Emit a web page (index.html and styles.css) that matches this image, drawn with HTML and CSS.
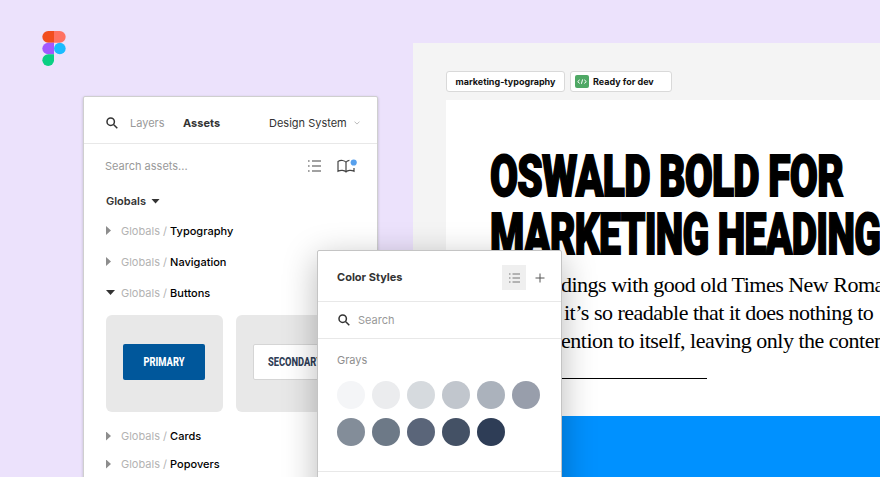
FILE: index.html
```html
<!DOCTYPE html>
<html lang="en">
<head>
<meta charset="utf-8">
<title>Design System</title>
<link rel="stylesheet" href="styles.css">
</head>
<body>
<main class="canvas">
  <svg class="logo" viewBox="0 0 24 36">
    <path fill="#f24e1e" d="M6 0h6v12H6A6 6 0 0 1 6 0z"/>
    <path fill="#ff7262" d="M12 0h6a6 6 0 0 1 0 12h-6z"/>
    <path fill="#a259ff" d="M6 12h6v12H6a6 6 0 0 1 0-12z"/>
    <circle fill="#1abcfe" cx="18" cy="18" r="6"/>
    <path fill="#0acf83" d="M6 24h6v6a6 6 0 1 1-6-6z"/>
  </svg>

  <section class="board">
    <div class="tags">
      <span class="tag tag-name">marketing-typography</span>
      <span class="tag tag-ready">
        <svg class="code" viewBox="0 0 14 13"><path d="M4.7 4.8 2.7 6.6l2 1.8M9.3 4.8l2 1.8-2 1.8M7.6 4.4 6.4 8.8"/></svg>
        Ready for dev
      </span>
    </div>
    <article class="page">
      <h1 class="headline">
        <svg class="headline-line" viewBox="0 0 440 58">
          <text x="0" y="44.5" textLength="353" lengthAdjust="spacingAndGlyphs">OSWALD BOLD FOR</text>
        </svg>
        <svg class="headline-line" viewBox="0 0 440 58">
          <text x="0" y="44.5" textLength="414" lengthAdjust="spacingAndGlyphs">MARKETING HEADINGS</text>
        </svg>
      </h1>
      <p class="copy">
        <span class="line"><span class="lead">hea</span>dings with good old Times New Roman.</span>
        <span class="line"><span class="lead lead-wide">And </span>it’s so readable that it does nothing to</span>
        <span class="line"><span class="lead">att</span>ention to itself, leaving only the content</span>
      </p>
      <hr class="rule">
      <div class="band"></div>
    </article>
  </section>

  <section class="window assets">
    <header class="tabs">
      <svg class="icon-search" viewBox="0 0 12 12"><circle cx="4.7" cy="4.7" r="3.7"/><path d="m7.5 7.5 3.8 3.8"/></svg>
      <span class="tab-layers">Layers</span>
      <span class="tab-assets">Assets</span>
      <span class="tab-file">Design System</span>
      <svg class="chevron" viewBox="0 0 6 4"><path d="M.5.6 3 3.1 5.5.6"/></svg>
    </header>
    <div class="find">
      <span class="find-text">Search assets...</span>
      <svg class="icon-list" viewBox="0 0 13 12"><path d="M0 1h1.6M4 1h9M0 6h1.6M4 6h9M0 11h1.6M4 11h9"/></svg>
      <svg class="icon-book" viewBox="0 0 20 14">
        <path d="M9 3.3C7.8 1.2 3.5.8 1 2.500v9.800c2.500-1.300 6.500-1.200 8 .7 1.500-1.900 5.500-2 8-.7V9M9 3.300V13M9 3.300c.7-1.200 2-1.900 3.400-2"/>
        <circle cx="16.700" cy="3.500" r="3.100"/>
      </svg>
    </div>
    <h2 class="group">Globals <i class="caret"></i></h2>
    <ul class="rows">
      <li class="row"><i class="arrow"></i><span>Globals / <b>Typography</b></span></li>
      <li class="row"><i class="arrow"></i><span>Globals / <b>Navigation</b></span></li>
      <li class="row"><i class="caret"></i><span>Globals / <b>Buttons</b></span></li>
    </ul>
    <div class="previews">
      <div class="preview">
        <div class="button primary"><svg class="label" viewBox="0 0 52 16"><text x="5.500" y="12.300" textLength="41" lengthAdjust="spacingAndGlyphs">PRIMARY</text></svg></div>
      </div>
      <div class="preview">
        <div class="button secondary"><svg class="label" viewBox="0 0 52 16"><text x="0" y="12.300" textLength="54" lengthAdjust="spacingAndGlyphs">SECONDARY</text></svg></div>
      </div>
    </div>
    <ul class="rows rows-after">
      <li class="row"><i class="arrow"></i><span>Globals / <b>Cards</b></span></li>
      <li class="row"><i class="arrow"></i><span>Globals / <b>Popovers</b></span></li>
    </ul>
  </section>

  <section class="window styles">
    <header class="styles-head">
      <h2 class="styles-title">Color Styles</h2>
      <span class="toggle"><svg viewBox="0 0 11 10"><path d="M0 1h1.500M3.500 1H11M0 5h1.500M3.500 5H11M0 9h1.500M3.500 9H11"/></svg></span>
      <svg class="plus" viewBox="0 0 10 10"><path d="M5 .5v9M.5 5h9"/></svg>
    </header>
    <div class="styles-find">
      <svg class="icon-search" viewBox="0 0 12 12"><circle cx="4.700" cy="4.700" r="3.700"/><path d="m7.500 7.500 3.800 3.800"/></svg>
      <span>Search</span>
    </div>
    <div class="grays">
      <h3 class="grays-title">Grays</h3>
      <div class="swatches">
        <i class="swatch g1"></i><i class="swatch g2"></i><i class="swatch g3"></i><i class="swatch g4"></i><i class="swatch g5"></i><i class="swatch g6"></i>
        <i class="swatch g7"></i><i class="swatch g8"></i><i class="swatch g9"></i><i class="swatch g10"></i><i class="swatch g11"></i>
      </div>
    </div>
  </section>
</main>
</body>
</html>
```
FILE: styles.css
```css
* { box-sizing: border-box; }
body { margin: 0; font-family: Inter, sans-serif; font-size: 11px; color: #333; }
h1, h2, h3, p, ul { margin: 0; padding: 0; font-size: inherit; }
ul { list-style: none; }
svg { display: block; flex: none; fill: none; }
.canvas { position: relative; width: 880px; height: 477px; overflow: hidden; background: #ece2fc; }
.logo { position: absolute; left: 42.4px; top: 31px; width: 24px; height: 35px; }

.board { position: absolute; left: 413px; top: 43px; width: 467px; height: 434px; padding: 28px 0 0 33px; background: #f4f4f4; overflow: hidden; }
.tags { display: flex; gap: 5px; height: 21px; }
.tag { display: flex; align-items: center; border: 1px solid #d9d9d9; border-radius: 3px; background: #fff; color: #111; font-size: 9px; font-weight: 700; white-space: nowrap; }
.tag-name { width: 119px; justify-content: center; }
.tag-ready { width: 102px; padding-left: 4px; gap: 4px; }
.code { width: 14px; height: 13px; border-radius: 2px; background: #4fa865; stroke: #fff; stroke-width: 1; }
.page { height: 377px; margin-top: 8px; padding-top: 51px; background: #fff; display: flex; flex-direction: column; }
.headline { margin-left: 44px; }
.headline-line { width: 440px; height: 58px; overflow: visible; }
.headline text { font-family: Roboto, sans-serif; font-size: 56.5px; font-weight: 900; letter-spacing: -1px; fill: #000; stroke: #000; stroke-width: 1.8px; }
.copy { margin: 4px 0 0 44px; font: 22px/28px "Liberation Serif", serif; letter-spacing: -.5px; color: #000; }
.line { display: flex; white-space: pre; }
.lead { flex: none; width: 71px; text-align: right; }
.lead-wide { width: 74px; }
.rule { width: 217px; height: 1px; margin: 23px 0 0 44px; border: 0; background: #000; }
.band { flex: 1; margin-top: 37px; background: #0091ff; }

.window { position: absolute; background: #fff; border: 1px solid #cfcfcf; border-radius: 2px 2px 0 0; }
.assets { left: 83px; top: 96px; width: 295px; height: 400px; box-shadow: 0 1px 3px rgba(0,0,0,.2); }
.tabs { display: flex; align-items: center; height: 47px; padding: 6px 17px 0 22px; border-bottom: 1px solid #e8e8e8; white-space: nowrap; }
.icon-search { width: 12px; height: 12px; stroke: #333; stroke-width: 1.5; }
.tab-layers { width: 53px; margin-left: 12px; color: #999; }
.tab-assets { width: 86px; font-weight: 700; }
.tab-file { width: 85px; }
.chevron { width: 6px; height: 4px; stroke: #bbb; }
.find { display: flex; align-items: center; height: 45px; padding: 0 20px 1px 21px; color: #999; }
.find-text { width: 203px; }
.icon-list { width: 13px; height: 12px; stroke: #444; stroke-width: 1.2; }
.icon-book { width: 20px; height: 14px; margin-left: 16px; stroke: #444; stroke-width: 1.2; }
.icon-book circle { fill: #57a0ed; stroke: none; }
.group { display: flex; align-items: center; gap: 5px; height: 24px; padding-left: 22px; font-weight: 600; }
.caret { width: 9px; height: 5px; background: #333; clip-path: polygon(0 0, 100% 0, 50% 100%); }
.arrow { width: 5px; height: 9px; margin-right: 4px; background: #8d8d8d; clip-path: polygon(0 0, 100% 50%, 0 100%); }
.rows { padding: 2px 0 0 22px; }
.row { display: flex; align-items: center; gap: 6px; height: 31px; color: #b3b3b3; }
.row b { color: #000; font-weight: 500; }
.previews { display: flex; gap: 13px; margin-top: 7px; padding-left: 22px; }
.preview { display: flex; align-items: center; justify-content: center; width: 117px; height: 97px; border-radius: 6px; background: #e8e8e8; }
.button { display: flex; align-items: center; justify-content: center; width: 82px; height: 36px; margin: 0 1px 3px 0; border-radius: 2px; }
.primary { background: #00579b; }
.primary .label { fill: #fff; }
.secondary { background: #fff; border: 1px solid #d5d5d5; }
.secondary .label { fill: #2f3d56; }
.label { width: 52px; height: 16px; overflow: visible; }
.label text { font-family: Roboto, sans-serif; font-size: 12px; font-weight: 800; }
.rows-after { padding-top: 10px; }
.rows-after .row { height: 28px; }

.styles { left: 317px; top: 250px; width: 245px; height: 300px; border-color: #c4c4c4; box-shadow: 0 8px 34px rgba(0,0,0,.28); }
.styles-head { display: flex; align-items: center; height: 51px; padding: 3px 16px 0 19px; border-bottom: 1px solid #e8e8e8; }
.styles-title { flex: 1; margin-bottom: 2px; font-weight: 700; }
.toggle { display: flex; align-items: center; justify-content: center; width: 24px; height: 25px; margin-right: 9px; background: #efefef; }
.toggle svg { width: 11px; height: 10px; stroke: #777; }
.plus { width: 10px; height: 10px; stroke: #555; }
.styles-find { display: flex; align-items: center; gap: 8px; height: 37px; padding-left: 20px; border-bottom: 1px solid #e8e8e8; color: #999; }
.grays { height: 133px; padding: 14px 19px 0; border-bottom: 1px solid #e8e8e8; }
.grays-title { height: 28px; line-height: 14px; color: #8f8f8f; font-weight: 400; }
.swatches { display: grid; grid-template-columns: repeat(6, 28px); gap: 9px 7px; }
.swatch { height: 28px; border-radius: 50%; }
.g1 { background: #f4f5f7; }
.g2 { background: #ebecee; }
.g3 { background: #d6dade; }
.g4 { background: #c1c6cd; }
.g5 { background: #abb2bc; }
.g6 { background: #989eab; }
.g7 { background: #838d99; }
.g8 { background: #6d7987; }
.g9 { background: #5a6579; }
.g10 { background: #445165; }
.g11 { background: #2e3d56; }
```
